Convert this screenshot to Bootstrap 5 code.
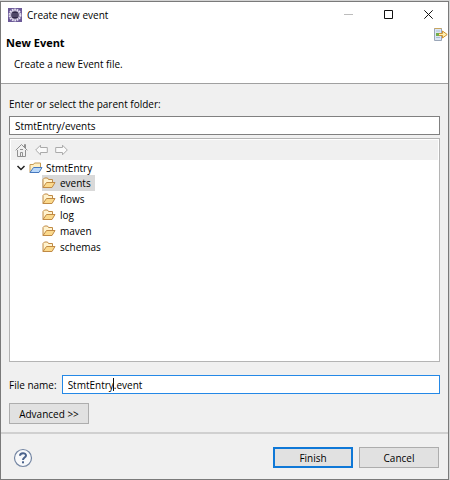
<!DOCTYPE html>
<html lang="en">
<head>
<meta charset="utf-8">
<meta name="viewport" content="width=device-width, initial-scale=1">
<title>Create new event</title>
<link href="https://cdn.jsdelivr.net/npm/bootstrap@5.3.0/dist/css/bootstrap.min.css" rel="stylesheet">
<style>
  body { font-family: "Open Sans", "Noto Sans", sans-serif; font-size: 10px; line-height: 16px; color: #000; background: #d4d4d4; padding: 1px 1px 0 0; }
  .dialog { background: #f0f0f0; border: 1px solid #7a7a7a; min-height: calc(100vh - 1px); }
  .dialog svg { display: block; flex: none; }
  .title-bar { height: 25px; padding-left: 7px; gap: 5px; }
  .title-bar h1 { font-size: 10px; line-height: 16px; }
  .win-btn { width: 40px; height: 25px; }
  .banner { height: 57px; padding: 8px 0 0 5px; border-bottom: 1px solid #a0a0a0; }
  .banner h2 { font-size: 11px; line-height: 16px; margin-bottom: 5px; }
  .banner p { padding-left: 8px; }
  .banner-icon { margin-top: -8px; }
  .form-area { padding: 12px 8px 7px 8px; }
  .dialog .form-control { font-size: 10px; line-height: 16px; min-height: 0; height: 19px; padding: 0 5px; border: 1px solid #808080; color: #000; background: #fff; box-shadow: none; transition: none; }
  .dialog .form-control.active-field { border-color: #2488e6; }
  .tree-box { background: #fff; border: 1px solid #b4b4b4; margin-top: 3px; height: 224px; padding: 1px; }
  .tool-strip { background: #f0f0f0; height: 20px; padding-left: 4px; gap: 7px; }
  .tool-btn { line-height: 0; }
  .tree-root { padding-left: 5px; }
  .tree-row { height: 16px; }
  .tree-head { height: 15px; gap: 3px; }
  .tree-name { padding: 0 4px; }
  .children { padding-left: 26px; }
  .picked { background: #d9d9d9; }
  .name-row { margin-top: 13px; gap: 5px; }
  .caret { position: absolute; left: 51px; top: 3px; width: 1px; height: 13px; background: #111; }
  .dlg-btn { font-size: 10px; line-height: 16px; color: #000; background: #e1e1e1; border: 1px solid #adadad; height: 21px; padding: 0; width: 80px; transition: none; }
  .dlg-btn.primary { border: 2px solid #0f78d7; }
  .advanced { margin-top: 9px; }
  .foot { border-top: 2px solid #d0d0d0; padding: 13px 9px 11px 12px; }
  .foot-actions { gap: 6px; }
</style>
</head>
<body>
<svg class="d-none" aria-hidden="true">
  <symbol id="folder" viewBox="0 0 14 12">
    <path d="M1 10.500V2.500L2.500 1H5.500L6.500 2.500H10.500V5" fill="#fff3cf" stroke="#c08a45"/>
    <path d="M1 10.500L4.500 5.500H13L10 10.500Z" fill="#fbd98c" stroke="#c08a45" stroke-linejoin="round"/>
  </symbol>
</svg>
<main class="dialog d-flex flex-column">
  <header class="bg-white">
    <div class="title-bar d-flex align-items-center">
      <svg width="14" height="14" viewBox="0 0 14 14" aria-hidden="true">
        <rect width="14" height="14" fill="#6c5a98"/>
        <circle cx="7" cy="7" r="5.400" fill="none" stroke="#e9e5f2" stroke-width="2" stroke-dasharray="1.700 .7"/>
        <circle cx="7" cy="7" r="4.600" fill="#d9d4e4"/>
        <circle cx="7" cy="7" r="3.800" fill="#302748"/>
        <path d="M3.500 6H10.500M3.500 8H10.500" stroke="#8e86a8" stroke-width=".7"/>
      </svg>
      <h1 class="fw-normal mb-0 me-auto">Create new event</h1>
      <div class="d-flex">
        <button type="button" class="win-btn btn p-0 border-0 rounded-0 d-flex align-items-center justify-content-center" aria-label="Minimize" disabled>
          <svg width="9" height="9" viewBox="0 0 9 9"><path d="M0 4.500H9" stroke="#999"/></svg></button>
        <button type="button" class="win-btn btn p-0 border-0 rounded-0 d-flex align-items-center justify-content-center" aria-label="Maximize">
          <svg width="9" height="9" viewBox="0 0 9 9"><path d="M.5 .5H8.500V8.500H.5Z" fill="none" stroke="#111"/></svg></button>
        <button type="button" class="win-btn btn p-0 border-0 rounded-0 d-flex align-items-center justify-content-center" aria-label="Close">
          <svg width="9" height="9" viewBox="0 0 9 9"><path d="M.3 .3L8.700 8.700M8.700 .3L.3 8.700" stroke="#111"/></svg></button>
      </div>
    </div>
    <div class="banner d-flex justify-content-between">
      <div>
        <h2 class="fw-bold">New Event</h2>
        <p class="mb-0">Create a new Event file.</p>
      </div>
      <svg class="banner-icon" width="14" height="15" viewBox="0 0 14 15" aria-hidden="true">
        <path d="M.5 1.500H7.500V13.500H.5Z" fill="#dce6f3" stroke="#9aa6b8"/>
        <path d="M.5 1.500H7.500" stroke="#c9a55c"/>
        <path d="M2 4H6M2 10.500H6" stroke="#a9bdd8"/>
        <path d="M4 6.500H8.500V4L13.200 7.500L8.500 11V8.500H4Z" fill="#fff0b0" stroke="#cf9330"/>
        <rect x="2" y="6" width="3" height="3" fill="#72ad4b"/>
      </svg>
    </div>
  </header>
  <form class="form-area flex-grow-1">
    <label for="parent" class="d-block mb-1">Enter or select the parent folder:</label>
    <input id="parent" type="text" class="form-control rounded-0" value="StmtEntry/events">
    <div class="tree-box">
      <div class="tool-strip d-flex align-items-center">
        <button type="button" class="tool-btn btn p-0 border-0" aria-label="Home">
          <svg width="13" height="14" viewBox="0 0 13 14"><path d="M2.500 7V13.500H10.500V7M.7 7.300L6.500 1.500L12.300 7.300M9.500 4V1.500H10.500V5" fill="none" stroke="#909090"/><path d="M5.500 13V9.500H7.500V13M5 6.500H8" fill="none" stroke="#909090"/></svg></button>
        <button type="button" class="tool-btn btn p-0 border-0" aria-label="Back">
          <svg width="13" height="12" viewBox="0 0 13 12"><path d="M.7 6L5.500 1.200V3.500H12.300V8.500H5.500V10.800Z" fill="#fafafa" stroke="#aaa"/></svg></button>
        <button type="button" class="tool-btn btn p-0 border-0" aria-label="Forward">
          <svg width="13" height="12" viewBox="0 0 13 12"><path d="M12.300 6L7.500 1.200V3.500H.7V8.500H7.500V10.800Z" fill="#fafafa" stroke="#aaa"/></svg></button>
      </div>
      <ul class="list-unstyled mb-0 tree-root">
        <li>
          <div class="tree-head d-flex align-items-center">
            <svg width="10" height="8" viewBox="0 0 10 8" aria-hidden="true"><path d="M1.500 2L5 5.500L8.500 2" fill="none" stroke="#222" stroke-width="1.500"/></svg>
            <svg width="14" height="12" viewBox="0 0 14 12" aria-hidden="true">
              <path d="M1 10.500V2.500H4.500L5.500 1H11.500V5" fill="#fff0c4" stroke="#c49a55"/>
              <path d="M1 10.500L4.500 5.500H13L10 10.500Z" fill="#b9d8fa" stroke="#4678be" stroke-linejoin="round"/>
            </svg>
            <span>StmtEntry</span>
          </div>
          <ul class="list-unstyled children">
            <li class="d-flex"><div class="tree-row picked d-flex align-items-center"><svg width="14" height="12"><use href="#folder"/></svg><span class="tree-name">events</span></div></li>
            <li class="d-flex"><div class="tree-row d-flex align-items-center"><svg width="14" height="12"><use href="#folder"/></svg><span class="tree-name">flows</span></div></li>
            <li class="d-flex"><div class="tree-row d-flex align-items-center"><svg width="14" height="12"><use href="#folder"/></svg><span class="tree-name">log</span></div></li>
            <li class="d-flex"><div class="tree-row d-flex align-items-center"><svg width="14" height="12"><use href="#folder"/></svg><span class="tree-name">maven</span></div></li>
            <li class="d-flex"><div class="tree-row d-flex align-items-center"><svg width="14" height="12"><use href="#folder"/></svg><span class="tree-name">schemas</span></div></li>
          </ul>
        </li>
      </ul>
    </div>
    <div class="name-row d-flex align-items-center">
      <label for="filename">File name:</label>
      <div class="position-relative flex-grow-1">
        <input id="filename" type="text" class="form-control active-field rounded-0" value="StmtEntry.event">
        <span class="caret"></span>
      </div>
    </div>
    <button type="button" class="dlg-btn advanced btn rounded-0 d-block">Advanced &gt;&gt;</button>
  </form>
  <footer class="foot d-flex align-items-center justify-content-between">
    <button type="button" class="btn p-0 border-0" aria-label="Help">
      <svg width="20" height="20" viewBox="0 0 20 20"><circle cx="10" cy="10" r="8.500" fill="#f8f9fb" stroke="#7486a3" stroke-width="1.200"/><path d="M7 7.800C7 4.300 13 4.300 13 7.500C13 9.500 10 9.700 10 12" fill="none" stroke="#4b638c" stroke-width="2"/><rect x="9" y="13.300" width="2" height="2" fill="#4b638c"/></svg></button>
    <div class="foot-actions d-flex">
      <button type="button" class="dlg-btn primary btn rounded-0">Finish</button>
      <button type="button" class="dlg-btn btn rounded-0">Cancel</button>
    </div>
  </footer>
</main>
<script src="https://cdn.jsdelivr.net/npm/bootstrap@5.3.0/dist/js/bootstrap.bundle.min.js"></script>
</body>
</html>
